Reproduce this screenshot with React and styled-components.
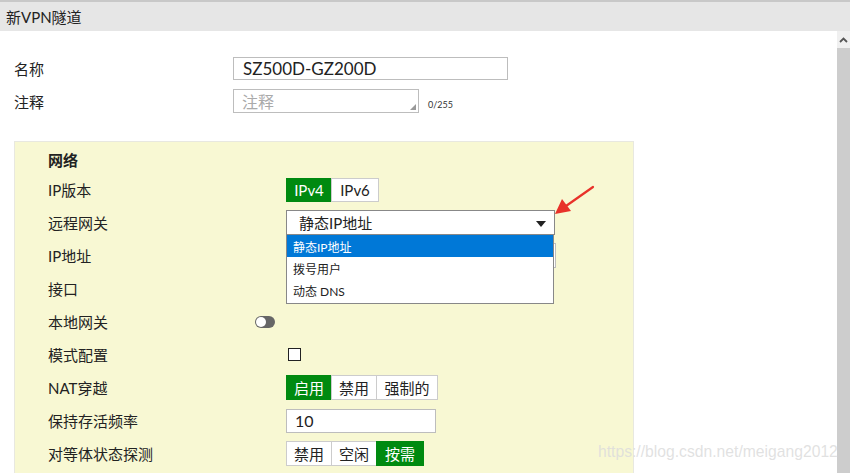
import React from "react";
import styled, { createGlobalStyle } from "styled-components";

const GlobalStyle = createGlobalStyle`
  html, body {
    margin: 0;
    padding: 0;
    height: 473px;
    overflow: hidden;
    background: #fff;
  }
  body {
    font-family: "Lato", "Noto Sans CJK SC", sans-serif;
    color: #333;
  }
`;

const Page = styled.div`
  position: relative;
  width: 850px;
  height: 473px;
  display: flex;
  flex-direction: column;
  overflow: hidden;
`;

const Header = styled.div`
  flex: none;
  background: #e6e6e6;
  border-top: 2px solid #c8c8c8;
  box-sizing: border-box;
  height: 31px;
  display: flex;
  align-items: center;
  padding-left: 6px;
  font-size: 15px;
  color: #222;
`;

const Body = styled.div`
  flex: 1;
  display: flex;
  min-height: 0;
`;

const Content = styled.div`
  flex: 1;
  padding: 26px 0 0 14px;
  display: flex;
  flex-direction: column;
`;

const Scrollbar = styled.div`
  width: 13px;
  flex: none;
  background: #cdcdcd;
  display: flex;
  flex-direction: column;
`;

const ScrollUp = styled.div`
  height: 17px;
  background: #f0f0f0;
  display: flex;
  align-items: center;
  justify-content: center;
`;

const TopRow = styled.div`
  display: flex;
  align-items: center;
  margin-bottom: ${p => p.gap || 0}px;
`;

const TopLabel = styled.div`
  width: 219px;
  font-size: 15px;
  color: #222;
`;

const TextInput = styled.div`
  width: ${p => p.w}px;
  height: ${p => p.h || 23}px;
  box-sizing: border-box;
  border: 1px solid #bdbdbd;
  background: #fff;
  display: flex;
  align-items: center;
  padding-left: ${p => p.pl || 8}px;
  font-size: ${p => p.fs || 15}px;
  color: ${p => (p.placeholder ? "#aaa" : "#222")};
  position: relative;
`;

const Grip = styled.span`
  position: absolute;
  right: 2px;
  bottom: 2px;
  width: 6px;
  height: 6px;
  background-image: radial-gradient(#999 0.8px, transparent 0.9px);
  background-size: 2px 2px;
  clip-path: polygon(100% 0, 100% 100%, 0 100%);
`;

const Counter = styled.span`
  font-size: 9px;
  color: #333;
  margin-left: 9px;
  margin-top: 6px;
`;

const Panel = styled.div`
  margin-top: 28px;
  width: 620px;
  flex: 1;
  box-sizing: border-box;
  background: #f8f8d3;
  border: 1px solid #e8e8e0;
  border-bottom: none;
  padding: 7px 0 0 33px;
`;

const Heading = styled.div`
  height: 20px;
  display: flex;
  align-items: center;
  font-size: 15px;
  font-weight: 700;
  color: #222;
  margin-bottom: 4px;
`;

const Row = styled.div`
  height: 33px;
  display: flex;
  align-items: center;
`;

const Label = styled.div`
  width: 238px;
  flex: none;
  font-size: 15px;
  color: #222;
`;

const Control = styled.div`
  position: relative;
  display: flex;
  align-items: center;
`;

const Segmented = styled.div`
  display: flex;
`;

const Seg = styled.div`
  height: ${p => p.h || 25}px;
  box-sizing: border-box;
  padding: 0 5px;
  min-width: ${p => p.w || 46}px;
  display: flex;
  align-items: center;
  justify-content: center;
  font-size: ${p => p.fs || 15}px;
  border: 1px solid ${p => (p.active ? "#008a10" : "#cccccc")};
  margin-left: ${p => (p.first ? 0 : -1)}px;
  background: ${p => (p.active ? "#008a10" : "#fff")};
  color: ${p => (p.active ? "#fff" : "#222")};
`;

const Select = styled.div`
  width: 269px;
  height: 25px;
  box-sizing: border-box;
  border: 1px solid #888;
  background: #fff;
  display: flex;
  align-items: center;
  justify-content: space-between;
  padding: 0 8px 0 12px;
  font-size: 15px;
  color: #222;
`;

const Caret = styled.span`
  width: 0;
  height: 0;
  border-left: 5px solid transparent;
  border-right: 5px solid transparent;
  border-top: 6px solid #222;
  margin-top: 2px;
`;

const Menu = styled.div`
  position: absolute;
  top: 24px;
  left: 0;
  width: 268px;
  box-sizing: border-box;
  border: 1px solid #888;
  background: #fff;
  z-index: 5;
  padding-bottom: 2px;
`;

const MenuItem = styled.div`
  height: 22px;
  display: flex;
  align-items: center;
  padding-left: 6px;
  font-size: 12px;
  background: ${p => (p.selected ? "#0078d7" : "transparent")};
  color: ${p => (p.selected ? "#fff" : "#222")};
`;

const Toggle = styled.div`
  margin-left: -31px;
  width: 20px;
  height: 12px;
  border-radius: 6px;
  background: #666;
  position: relative;
  &::before {
    content: "";
    position: absolute;
    left: 1px;
    top: 1px;
    width: 10px;
    height: 10px;
    border-radius: 50%;
    background: #fff;
  }
`;

const Checkbox = styled.div`
  margin-left: 2px;
  width: 13px;
  height: 13px;
  box-sizing: border-box;
  border: 1.5px solid #222;
  background: #fff;
`;

const Watermark = styled.div`
  position: absolute;
  left: 598px;
  top: 443px;
  font-family: "Liberation Sans", Arial, sans-serif;
  font-size: 15.7px;
  color: rgba(220, 220, 220, 0.85);
  pointer-events: none;
  white-space: nowrap;
`;

const Arrow = styled.svg`
  position: absolute;
  left: 550px;
  top: 182px;
  pointer-events: none;
  z-index: 10;
`;

export default function App() {
  return (
    <Page>
      <GlobalStyle />
      <Header>新VPN隧道</Header>
      <Body>
        <Content>
          <TopRow gap={9}>
            <TopLabel>名称</TopLabel>
            <TextInput w={275} fs={17} pl={9}>SZ500D-GZ200D</TextInput>
          </TopRow>
          <TopRow>
            <TopLabel>注释</TopLabel>
            <TextInput w={186} h={24} fs={16} placeholder>
              注释
              <Grip />
            </TextInput>
            <Counter>0/255</Counter>
          </TopRow>
          <Panel>
            <Heading>网络</Heading>
            <Row>
              <Label>IP版本</Label>
              <Segmented>
                <Seg first active h={24}>IPv4</Seg>
                <Seg w={48} h={24}>IPv6</Seg>
              </Segmented>
            </Row>
            <Row>
              <Label>远程网关</Label>
              <Control>
                <Select>
                  静态IP地址
                  <Caret />
                </Select>
                <Menu>
                  <MenuItem selected>静态IP地址</MenuItem>
                  <MenuItem>拨号用户</MenuItem>
                  <MenuItem>动态 DNS</MenuItem>
                </Menu>
              </Control>
            </Row>
            <Row>
              <Label>IP地址</Label>
              <TextInput w={270} h={25} />
            </Row>
            <Row>
              <Label>接口</Label>
            </Row>
            <Row>
              <Label>本地网关</Label>
              <Toggle />
            </Row>
            <Row>
              <Label>模式配置</Label>
              <Checkbox />
            </Row>
            <Row>
              <Label>NAT穿越</Label>
              <Segmented>
                <Seg first active>启用</Seg>
                <Seg>禁用</Seg>
                <Seg w={62}>强制的</Seg>
              </Segmented>
            </Row>
            <Row>
              <Label>保持存活频率</Label>
              <TextInput w={150} h={24} fs={16}>10</TextInput>
            </Row>
            <Row>
              <Label>对等体状态探测</Label>
              <Segmented>
                <Seg first>禁用</Seg>
                <Seg>空闲</Seg>
                <Seg w={48} active>按需</Seg>
              </Segmented>
            </Row>
          </Panel>
        </Content>
        <Scrollbar>
          <ScrollUp>
            <svg width="9" height="6" viewBox="0 0 9 6">
              <path d="M1 5 L4.5 1.5 L8 5" fill="none" stroke="#555" strokeWidth="1.8" />
            </svg>
          </ScrollUp>
        </Scrollbar>
      </Body>
      <Arrow width="50" height="40" viewBox="0 0 50 40">
        <line x1="43" y1="5" x2="16" y2="24" stroke="#e8322a" strokeWidth="2.2" strokeLinecap="round" />
        <polygon points="5,32 12,17 21,29" fill="#e8322a" />
      </Arrow>
      <Watermark>https://blog.csdn.net/meigang2012</Watermark>
    </Page>
  );
}
